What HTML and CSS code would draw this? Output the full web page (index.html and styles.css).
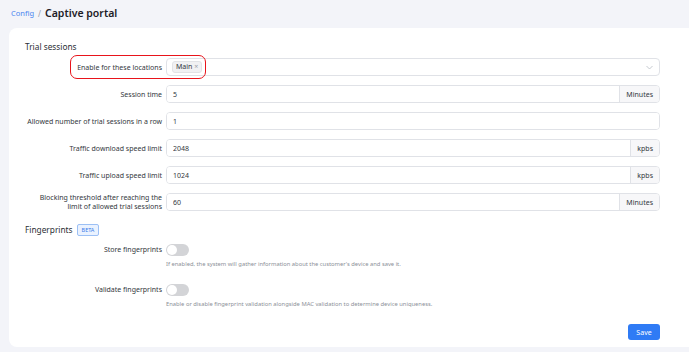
FILE: index.html
```html
<!DOCTYPE html>
<html lang="en">
<head>
  <meta charset="UTF-8">
  <title>Captive portal</title>
  <link rel="stylesheet" href="styles.css">
</head>
<body>
  <div class="breadcrumb">
    <a class="crumb-link" href="#">Config</a>
    <span class="crumb-sep">/</span>
    <span class="crumb-title">Captive portal</span>
  </div>

  <div class="card">
    <div class="section-title">Trial sessions</div>

    <div class="form-row highlight-row">
      <label class="form-label">Enable for these locations</label>
      <div class="select-box">
        <span class="tag">Main <span class="tag-x">&times;</span></span>
        <svg class="chevron" width="7" height="5" viewBox="0 0 7 5"><path d="M0.5 1l3 3 3-3" fill="none" stroke="#b8bcc4" stroke-width="0.8"/></svg>
      </div>
      <span class="highlight"></span>
    </div>

    <div class="form-row">
      <label class="form-label">Session time</label>
      <div class="input-group">
        <input class="input" type="text" value="5">
        <span class="addon">Minutes</span>
      </div>
    </div>

    <div class="form-row">
      <label class="form-label">Allowed number of trial sessions in a row</label>
      <div class="input-group">
        <input class="input" type="text" value="1">
      </div>
    </div>

    <div class="form-row">
      <label class="form-label">Traffic download speed limit</label>
      <div class="input-group">
        <input class="input" type="text" value="2048">
        <span class="addon">kpbs</span>
      </div>
    </div>

    <div class="form-row">
      <label class="form-label">Traffic upload speed limit</label>
      <div class="input-group">
        <input class="input" type="text" value="1024">
        <span class="addon">kpbs</span>
      </div>
    </div>

    <div class="form-row">
      <label class="form-label">Blocking threshold after reaching the limit of allowed trial sessions</label>
      <div class="input-group">
        <input class="input" type="text" value="60">
        <span class="addon">Minutes</span>
      </div>
    </div>

    <div class="section-title fp-title">Fingerprints <span class="badge">BETA</span></div>

    <div class="toggle-row">
      <label class="form-label">Store fingerprints</label>
      <div>
        <span class="toggle"></span>
        <p class="help">If enabled, the system will gather information about the customer's device and save it.</p>
      </div>
    </div>

    <div class="toggle-row">
      <label class="form-label">Validate fingerprints</label>
      <div>
        <span class="toggle"></span>
        <p class="help">Enable or disable fingerprint validation alongside MAC validation to determine device uniqueness.</p>
      </div>
    </div>

    <div class="actions">
      <button class="save-btn">Save</button>
    </div>
  </div>
</body>
</html>
```

FILE: styles.css
```css
* {
  margin: 0;
  padding: 0;
  box-sizing: border-box;
}

body {
  font-family: "Noto Sans", "Open Sans", sans-serif;
  background: #f3f4f9;
  color: #2b2f36;
  padding: 6px 0 5px 9px;
}

.breadcrumb {
  display: flex;
  align-items: center;
  gap: 4px;
  height: 14px;
  padding-left: 2px;
  margin-bottom: 8px;
}

.crumb-link {
  color: #4a86f0;
  font-size: 7.5px;
  text-decoration: none;
}

.crumb-sep {
  color: #9aa0aa;
  font-size: 8px;
}

.crumb-title {
  font-size: 10.5px;
  font-weight: 600;
  color: #1d2026;
}

.card {
  background: #fff;
  border-radius: 8px 0 0 8px;
  padding: 13px 29px 9px 16px;
  height: 319px;
}

.section-title {
  font-size: 8.3px;
  color: #2b2f36;
  height: 12px;
  line-height: 12px;
  margin-bottom: 5px;
}

.form-row {
  display: grid;
  grid-template-columns: 137px 1fr;
  column-gap: 4px;
  align-items: center;
  margin-bottom: 9px;
  position: relative;
}

.form-label {
  font-size: 7px;
  line-height: 9px;
  color: #33373d;
  text-align: right;
}

.select-box,
.input-group {
  display: flex;
  height: 18px;
  border: 1px solid #e0e2e7;
  border-radius: 4px;
  overflow: hidden;
}

.select-box {
  align-items: center;
  padding: 0 6px 0 5px;
  justify-content: space-between;
}

.tag {
  font-size: 7px;
  background: #f1f1f3;
  border: 1px solid #e2e3e6;
  border-radius: 3px;
  padding: 0 3px;
  line-height: 10px;
  color: #33373d;
}

.tag-x {
  color: #9aa0aa;
}

.highlight {
  position: absolute;
  left: 45px;
  top: -3px;
  width: 136px;
  height: 24px;
  border: 1.3px solid #e8141b;
  border-radius: 7px;
  pointer-events: none;
}

.input {
  flex: 1;
  border: none;
  outline: none;
  font-family: inherit;
  font-size: 7px;
  color: #33373d;
  padding: 0 6px;
  min-width: 0;
}

.addon {
  font-size: 7px;
  color: #33373d;
  background: #f7f7f9;
  border-left: 1px solid #e0e2e7;
  display: flex;
  align-items: center;
  padding: 0 6px;
}

.fp-title {
  display: flex;
  align-items: center;
  gap: 4px;
  margin-top: 13px;
  margin-bottom: 8px;
}

.badge {
  font-size: 5.5px;
  color: #3a7be8;
  background: #eaf2ff;
  border: 1px solid #9cc0f5;
  border-radius: 2px;
  padding: 0 4px;
  line-height: 10px;
}

.toggle-row {
  display: grid;
  grid-template-columns: 137px 1fr;
  column-gap: 4px;
  margin-bottom: 16px;
}

.toggle-row .form-label {
  line-height: 12px;
}

.toggle {
  display: block;
  width: 23px;
  height: 12px;
  border-radius: 6px;
  background: #d3d4d7;
  position: relative;
}

.toggle::after {
  content: "";
  position: absolute;
  left: 1px;
  top: 1px;
  width: 10px;
  height: 10px;
  border-radius: 50%;
  background: #fff;
}

.help {
  font-size: 5.8px;
  color: #8c9098;
  margin-top: 4px;
  line-height: 8px;
}

.actions {
  display: flex;
  justify-content: flex-end;
  margin-top: 6px;
}

.save-btn {
  font-family: inherit;
  font-size: 7px;
  color: #fff;
  background: #2f7bf5;
  border: none;
  border-radius: 3px;
  width: 32px;
  height: 16px;
}
```
